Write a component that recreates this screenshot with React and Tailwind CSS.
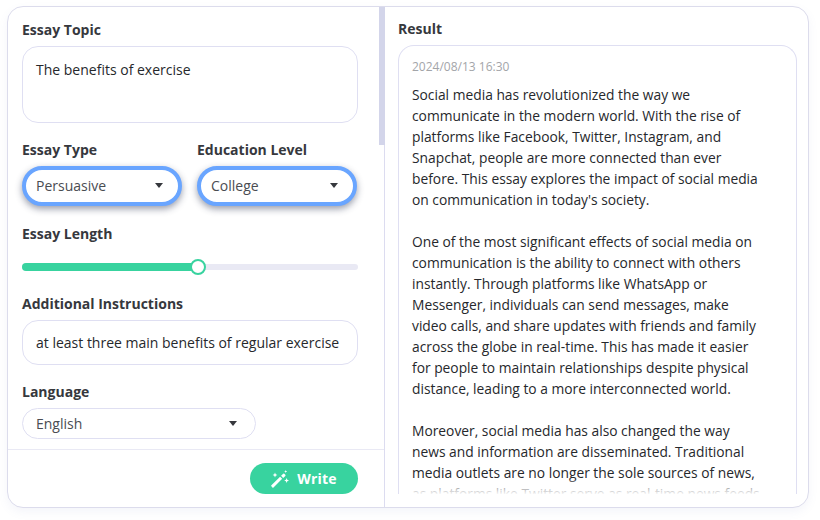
import React from 'react';

const paragraphs = [
  [
    'Social media has revolutionized the way we',
    'communicate in the modern world. With the rise of',
    'platforms like Facebook, Twitter, Instagram, and',
    'Snapchat, people are more connected than ever',
    'before. This essay explores the impact of social media',
    "on communication in today's society.",
  ],
  [
    'One of the most significant effects of social media on',
    'communication is the ability to connect with others',
    'instantly. Through platforms like WhatsApp or',
    'Messenger, individuals can send messages, make',
    'video calls, and share updates with friends and family',
    'across the globe in real-time. This has made it easier',
    'for people to maintain relationships despite physical',
    'distance, leading to a more interconnected world.',
  ],
  [
    'Moreover, social media has also changed the way',
    'news and information are disseminated. Traditional',
    'media outlets are no longer the sole sources of news,',
    'as platforms like Twitter serve as real-time news feeds',
  ],
];

function Label({ children, className = '' }) {
  return <div className={`text-[14px] leading-[20px] font-bold text-[#36383d] ${className}`}>{children}</div>;
}

function Caret() {
  return <span className="w-0 h-0 border-x-[4.5px] border-x-transparent border-t-[5px] border-t-[#36383d]" />;
}

function FocusedSelect({ value }) {
  return (
    <div className="h-[39.5px] flex items-center justify-between pl-[10px] pr-[15.500px] rounded-full bg-white border-[4.5px] border-[#69a5ff] shadow-[0_3px_7px_rgba(30,40,70,0.45)] text-[14px] text-[#4a4c52]">
      <span>{value}</span>
      <Caret />
    </div>
  );
}

function WandIcon() {
  return (
    <svg width="18" height="18" viewBox="0 0 18 18" fill="white">
      <path d="M1.4 17.4.4 16.3a.8.8 0 0 1 0-1.1l8.7-8.5 2.100 2.100-8.700 8.600a.8.8 0 0 1-1.100 0Z" />
      <path d="m10.100 5.800 2.100-2a.8.8 0 0 1 1.100 0l1 1a.8.8 0 0 1 0 1.100l-2.100 2Z" />
      <path d="m4 2.600.7 1.700 1.700.7-1.700.7L4 7.400l-.7-1.700L1.600 5l1.700-.7Z" />
      <path d="m14.700 0 .4 1.100 1.100.4-1.100.4-.4 1.100-.4-1.100-1.100-.4 1.100-.4Z" />
      <path d="m15.600 8.100.7 1.700 1.700.7-1.700.7-.7 1.700-.7-1.700-1.700-.7 1.700-.7Z" />
    </svg>
  );
}

function LeftPanel() {
  return (
    <div className="relative w-[377px] shrink-0 flex flex-col border-r border-[#dcdcf0]">
      <div className="absolute right-[-1px] top-0 w-[6px] h-[138px] bg-[#d3d5ea]" />
      <div className="h-[442px] overflow-hidden px-[14px] pt-[13px]">
        <Label>Essay Topic</Label>
        <div className="mt-[6px] h-[77px] w-[336px] rounded-[16px] border border-[#dfdff2] px-[13px] py-[12px] text-[14px] leading-[21px] text-[#26282c]">
          The benefits of exercise
        </div>
        <div className="mt-[17px] flex gap-[15px]">
          <div className="w-[160px]">
            <Label>Essay Type</Label>
            <div className="mt-[6px]"><FocusedSelect value="Persuasive" /></div>
          </div>
          <div className="w-[160px]">
            <Label>Education Level</Label>
            <div className="mt-[6px]"><FocusedSelect value="College" /></div>
          </div>
        </div>
        <Label className="mt-[18.5px]">Essay Length</Label>
        <div className="mt-[20px] relative h-[6px] w-[336px] rounded-full bg-[#e9e9f4]">
          <div className="absolute left-0 top-[-1px] h-[8px] w-[176px] rounded-full bg-[#38d39f]" />
          <div className="absolute left-[168px] top-[-5px] h-[16px] w-[16px] rounded-full bg-white border-2 border-[#38d39f]" />
        </div>
        <Label className="mt-[24px]">Additional Instructions</Label>
        <div className="mt-[6px] h-[45px] w-[336px] flex items-center rounded-[16px] border border-[#dfdff2] px-[13px] text-[14px] text-[#26282c]">
          at least three main benefits of regular exercise
        </div>
        <Label className="mt-[17px]">Language</Label>
        <div className="mt-[6px] h-[31px] w-[234px] flex items-center justify-between rounded-full border border-[#dfdff2] pl-[13px] pr-[18.5px] text-[14px] text-[#4a4c52]">
          <span>English</span>
          <Caret />
        </div>
      </div>
      <div className="flex-1 border-t border-[#e9e9f4] flex items-start justify-end pt-[13px] pr-[26px]">
        <div className="h-[31px] w-[108px] flex items-center justify-center gap-[8px] rounded-full bg-[#38d39f] text-white text-[14px] font-bold tracking-[0.2px]">
          <WandIcon />
          <span>Write</span>
        </div>
      </div>
    </div>
  );
}

function ResultPanel() {
  return (
    <div className="flex-1 min-w-0 flex flex-col pl-[13px] pr-[11px] pt-[12px]">
      <Label>Result</Label>
      <div className="relative mt-[6px] h-[449px] w-[399px] overflow-hidden rounded-t-[16px] border-x border-t border-[#dfdff2] px-[13px] pt-[10px] text-[13.8px] leading-[21px] text-[#26282c]">
        <div className="text-[12px] leading-[21px] text-[#a3a5a9]">2024/08/13 16:30</div>
        <div className="mt-[7px] flex flex-col gap-[21px]">
          {paragraphs.map((lines, i) => (
            <div key={i}>
              {lines.map((line) => (
                <div key={line} className="whitespace-nowrap">{line}</div>
              ))}
            </div>
          ))}
        </div>
        <div className="absolute left-0 right-0 bottom-0 h-[14px] bg-gradient-to-b from-white/20 to-white/95" />
      </div>
    </div>
  );
}

export default function App() {
  return (
    <div className="w-[820px] h-[520px] bg-white pl-[7px] pt-[6px] font-['Open_Sans',sans-serif]">
      <div className="w-[802px] h-[502px] flex overflow-hidden rounded-[16px] border border-[#dcdcec] bg-white shadow-[0_4px_10px_rgba(120,130,190,0.08)]">
        <LeftPanel />
        <ResultPanel />
      </div>
    </div>
  );
}
